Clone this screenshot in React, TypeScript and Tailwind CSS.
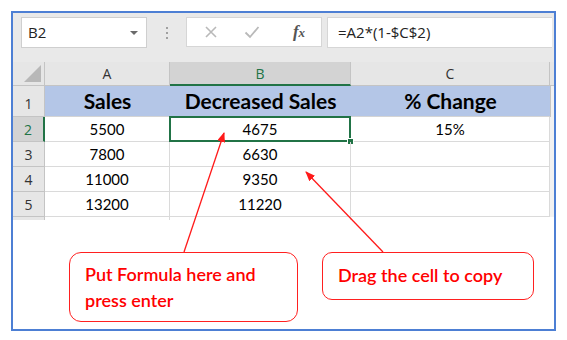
import React from 'react';

const sheetFont = { fontFamily: 'Lato, "Open Sans", sans-serif' };
const uiFont = { fontFamily: '"Open Sans", "Liberation Sans", sans-serif' };

const rows = [
  { n: '2', a: '5500', b: '4675', c: '15%' },
  { n: '3', a: '7800', b: '6630', c: '' },
  { n: '4', a: '11000', b: '9350', c: '' },
  { n: '5', a: '13200', b: '11220', c: '' },
];

function Toolbar() {
  return (
    <div className="flex items-start h-[49px] bg-[#e9e9e9] pl-2 pt-1" style={uiFont}>
      <div className="w-[126px] h-[31px] bg-white border border-[#cfcfcf] flex items-center justify-between pl-[6px] pr-[8px]">
        <span className="text-[15px] text-[#222]">B2</span>
        <span className="w-0 h-0 border-l-[4px] border-r-[4px] border-t-[4px] border-l-transparent border-r-transparent border-t-[#6a6a6a]" />
      </div>
      <div className="w-[39px] h-[31px] flex flex-col items-center justify-center gap-[3px]">
        <span className="w-[2px] h-[2px] bg-[#a0a0a0]" />
        <span className="w-[2px] h-[2px] bg-[#a0a0a0]" />
        <span className="w-[2px] h-[2px] bg-[#a0a0a0]" />
      </div>
      <div className="w-[136px] h-[30px] bg-white border border-[#d6d6d6] flex items-center">
        <span className="w-[48px] flex justify-center">
          <svg width="14" height="14" viewBox="0 0 14 14">
            <path d="M2 2 L12 12 M12 2 L2 12" stroke="#b9b9b9" strokeWidth="1.6" fill="none" />
          </svg>
        </span>
        <span className="w-[34px] flex justify-center">
          <svg width="16" height="14" viewBox="0 0 16 14">
            <path d="M1.5 7.5 L6 12 L14.5 2" stroke="#b9b9b9" strokeWidth="1.8" fill="none" />
          </svg>
        </span>
        <span className="flex-1 flex justify-center pl-2">
          <span className="italic font-bold text-[17px] text-[#555]" style={{ fontFamily: '"Liberation Serif", serif' }}>
            f<span className="text-[13px]">x</span>
          </span>
        </span>
      </div>
      <div className="ml-[5px] w-[225px] h-[31px] bg-white border-t border-l border-b border-[#d6d6d6] flex items-center pl-[10px]">
        <span className="text-[15px] text-[#222]">=A2*(1-$C$2)</span>
      </div>
    </div>
  );
}

function ColumnHeaders() {
  return (
    <div className="flex h-[24px] bg-[#e6e6e6] text-[14px] text-[#333]" style={uiFont}>
      <div className="w-[32px] border-r border-b border-[#c4c4c4] relative">
        <svg className="absolute right-[3px] bottom-[3px]" width="17" height="17" viewBox="0 0 17 17">
          <path d="M17 0 L17 17 L0 17 Z" fill="#b8b8b8" />
        </svg>
      </div>
      <div className="w-[125px] flex items-center justify-center border-r border-b border-[#c4c4c4]">A</div>
      <div className="w-[181px] flex items-center justify-center bg-[#d3d3d3] border-r border-[#c4c4c4] border-b-2 border-b-[#217346] text-[#217346]">
        B
      </div>
      <div className="w-[199px] flex items-center justify-center border-r border-b border-[#c4c4c4]">C</div>
      <div className="flex-1 border-b border-[#c4c4c4]" />
    </div>
  );
}

function Sheet() {
  return (
    <div className="bg-white">
      <ColumnHeaders />
      <div className="flex h-[31px]">
        <div className="w-[32px] bg-[#e6e6e6] border-r border-b border-[#c4c4c4] flex items-end justify-center pb-[2px] text-[14px] text-[#333]" style={uiFont}>
          1
        </div>
        <div className="w-[505px] bg-[#b4c6e7] flex items-center text-[21px] font-bold text-black border-b border-[#d4d4d4]" style={sheetFont}>
          <span className="w-[125px] text-center">Sales</span>
          <span className="w-[181px] text-center">Decreased Sales</span>
          <span className="w-[199px] text-center">% Change</span>
        </div>
        <div className="flex-1 bg-[#f2f2f2] border-l border-[#c4c4c4]" />
      </div>
      {rows.map((r) => {
        const sel = r.n === '2';
        return (
          <div key={r.n} className="flex h-[25px] text-[15px] text-black" style={sheetFont}>
            <div
              className={
                sel
                  ? 'w-[32px] bg-[#d3d3d3] border-r-2 border-r-[#217346] border-b border-b-[#c4c4c4] flex items-center justify-center text-[14px] text-[#217346]'
                  : 'w-[32px] bg-[#e6e6e6] border-r border-b border-[#c4c4c4] flex items-center justify-center text-[14px] text-[#333]'
              }
              style={uiFont}
            >
              {r.n}
            </div>
            <div className="w-[125px] flex items-center justify-center border-r border-b border-[#dadada]">{r.a}</div>
            <div className="w-[181px] flex items-center justify-center border-r border-b border-[#dadada] relative">
              {r.b}
              {sel && (
                <>
                  <span className="absolute -left-px -top-px -right-px -bottom-px border-2 border-[#217346]" />
                  <span className="absolute -right-[4px] -bottom-[4px] w-[7px] h-[7px] bg-[#217346] border border-white" />
                </>
              )}
            </div>
            <div className="w-[199px] flex items-center justify-center border-r border-b border-[#dadada]">{r.c}</div>
            <div className="flex-1 bg-[#f2f2f2]" />
          </div>
        );
      })}
      <div className="flex h-[3px]">
        <div className="w-[32px] bg-[#e6e6e6] border-r border-[#c4c4c4]" />
        <div className="w-[125px] border-r border-[#dadada]" />
        <div className="w-[181px] border-r border-[#dadada]" />
      </div>
    </div>
  );
}

function Callouts() {
  return (
    <div className="flex items-start pt-[32px] pl-[56px] gap-[24px] font-semibold text-[#ff0000] text-[18px] leading-[26px]" style={sheetFont}>
      <div className="w-[229px] h-[70px] border-[1.5px] border-[#ff2020] rounded-[12px] bg-white pl-[15px] pt-[8px]">
        Put Formula here and
        <br />
        press enter
      </div>
      <div className="w-[212px] h-[48px] border-[1.5px] border-[#ff2020] rounded-[10px] bg-white pl-[15px] pt-[9px]">
        Drag the cell to copy
      </div>
    </div>
  );
}

function Arrows() {
  return (
    <svg className="absolute inset-0 pointer-events-none" width="567" height="340" viewBox="0 0 567 340">
      <defs>
        <marker id="ah" markerWidth="10" markerHeight="8" refX="9" refY="4" orient="auto" markerUnits="userSpaceOnUse">
          <path d="M0 0 L10 4 L0 8 Z" fill="#ff1a1a" />
        </marker>
      </defs>
      <line x1="184" y1="252" x2="224" y2="133" stroke="#ff1a1a" strokeWidth="1.3" markerEnd="url(#ah)" />
      <line x1="383" y1="252" x2="306" y2="172" stroke="#ff1a1a" strokeWidth="1.3" markerEnd="url(#ah)" />
    </svg>
  );
}

export default function App() {
  return (
    <div className="relative w-[567px] h-[340px] bg-white overflow-hidden">
      <div className="ml-[11px] mt-[11px] w-[545px] h-[320px] border-2 border-[#4d7fd4] bg-white">
        <Toolbar />
        <Sheet />
        <Callouts />
      </div>
      <Arrows />
    </div>
  );
}
